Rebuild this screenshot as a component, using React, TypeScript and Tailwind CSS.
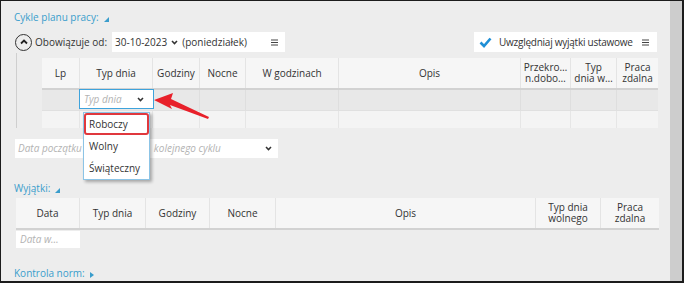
import type { ReactNode } from "react";

type Col = { label: string | string[]; w: string };

const planCols: Col[] = [
  { label: "Lp", w: "w-[38px]" },
  { label: "Typ dnia", w: "w-[73px]" },
  { label: "Godziny", w: "w-[47px]" },
  { label: "Nocne", w: "w-[46px]" },
  { label: "W godzinach", w: "w-[93px]" },
  { label: "Opis", w: "w-[182px]" },
  { label: ["Przekro…", "n.dobo…"], w: "w-[50px]" },
  { label: ["Typ", "dnia w…"], w: "w-[46px]" },
  { label: ["Praca", "zdalna"], w: "w-[41px]" },
];

const exceptionCols: Col[] = [
  { label: "Data", w: "w-[64px]" },
  { label: "Typ dnia", w: "w-[66px]" },
  { label: "Godziny", w: "w-[64px]" },
  { label: "Nocne", w: "w-[66px]" },
  { label: "Opis", w: "w-[260px]" },
  { label: ["Typ dnia", "wolnego"], w: "w-[65px]" },
  { label: ["Praca", "zdalna"], w: "w-[58px]" },
];

function Chevron() {
  return (
    <svg width="7" height="5" viewBox="0 0 7 5" className="shrink-0">
      <polyline points="1,1 3.5,3.6 6,1" fill="none" stroke="#333" strokeWidth="1.5" />
    </svg>
  );
}

function MenuIcon() {
  return (
    <svg width="7" height="7" viewBox="0 0 7 7" className="shrink-0">
      <path d="M0 1h7M0 3.5h7M0 6h7" stroke="#444" strokeWidth="1" />
    </svg>
  );
}

function SectionTitle({ children, open }: { children: ReactNode; open: boolean }) {
  return (
    <div className="flex h-[13px] items-center gap-[5px] text-[#3a9dcc]">
      <span>{children}</span>
      {open ? (
        <svg width="5" height="5" viewBox="0 0 5 5" className="mt-[3px]">
          <polygon points="5,0 5,5 0,5" fill="#3a9dcc" />
        </svg>
      ) : (
        <svg width="4" height="6" viewBox="0 0 4 6" className="mt-[2px]">
          <polygon points="0,0 4,3 0,6" fill="#3a9dcc" />
        </svg>
      )}
    </div>
  );
}

function HeaderRow({ cols }: { cols: Col[] }) {
  return (
    <div className="flex h-[32px] border-b-2 border-[#d2d2d2] bg-[#f6f6f6]">
      {cols.map((c, i) => (
        <div
          key={i}
          className={`${c.w} flex flex-col items-center justify-center text-center leading-[11px] ${
            i < cols.length - 1 ? "border-r border-[#e4e4e4]" : ""
          }`}
        >
          {Array.isArray(c.label) ? c.label.map((l) => <span key={l}>{l}</span>) : c.label}
        </div>
      ))}
    </div>
  );
}

export default function App() {
  return (
    <div className="relative flex h-[283px] w-[684px] overflow-hidden border-t border-l border-r-2 border-b-2 border-[#1c1c1c] bg-[#ededed] font-['Open_Sans',sans-serif] text-[10px] text-[#333]">
      <div className="flex flex-1 flex-col pl-[13px] pt-[10px]">
        <SectionTitle open>Cykle planu pracy:</SectionTitle>

        <div className="mt-[8px] flex h-[20px] w-[643px] items-center justify-between">
          <div className="flex items-center">
            <div className="ml-[1px] flex h-[17px] w-[17px] items-center justify-center rounded-full border-[1.5px] border-[#333]">
              <svg width="8" height="6" viewBox="0 0 8 6">
                <polyline points="1,4.5 4,1.5 7,4.5" fill="none" stroke="#222" strokeWidth="1.8" />
              </svg>
            </div>
            <span className="ml-[3px]">Obowiązuje od:</span>
            <div className="ml-[5px] flex h-[20px] w-[173px] items-center bg-white pl-[3px] pr-[7px]">
              <span>30-10-2023</span>
              <span className="ml-[4px]">
                <Chevron />
              </span>
              <span className="ml-[4px]">(poniedziałek)</span>
              <span className="ml-auto">
                <MenuIcon />
              </span>
            </div>
          </div>
          <div className="flex h-[20px] w-[183px] items-center bg-white pl-[5px] pr-[8px]">
            <svg width="13" height="11" viewBox="0 0 13 11" className="shrink-0">
              <polyline points="1.5,5.5 5,9 11.5,1.5" fill="none" stroke="#1f8fd6" strokeWidth="2.6" />
            </svg>
            <span className="ml-[7px] tracking-[-0.25px]">Uwzględniaj wyjątki ustawowe</span>
            <span className="ml-auto">
              <MenuIcon />
            </span>
          </div>
        </div>

        <div className="ml-[2px] mt-[1px] border-l border-[#cfcfcf] pl-[25px] pt-[5px]">
          <div className="w-[616px]">
            <HeaderRow cols={planCols} />
            <div className="flex h-[20px] bg-[#e8e8e8]">
              {planCols.map((c, i) =>
                i === 1 ? (
                  <div
                    key={i}
                    className="-mx-[1px] -mt-[1px] flex h-[20px] w-[75px] items-center border border-[#3ea3dc] bg-white pl-[4px] pr-[9px]"
                  >
                    <span className="italic text-[#b3b3b3]">Typ dnia</span>
                    <span className="ml-auto">
                      <Chevron />
                    </span>
                  </div>
                ) : (
                  <div
                    key={i}
                    className={`${c.w} ${i < planCols.length - 1 ? "border-r border-[#dedede]" : ""}`}
                  />
                )
              )}
            </div>
            <div className="flex h-[18px] border-t border-[#e0e0e0] bg-[#f4f4f4]">
              {planCols.map((c, i) => (
                <div
                  key={i}
                  className={`${c.w} ${i < planCols.length - 1 ? "border-r border-[#e6e6e6]" : ""}`}
                />
              ))}
            </div>
          </div>
        </div>

        <div className="ml-[1px] mt-[11px] flex h-[19px] w-[263px] items-center bg-white pl-[3px] pr-[6px]">
          <span className="italic text-[#b3b3b3]">Data początku</span>
          <span className="ml-[72px] italic text-[#b3b3b3]">kolejnego cyklu</span>
          <span className="ml-auto">
            <Chevron />
          </span>
        </div>

        <div className="mt-[24px]">
          <SectionTitle open>Wyjątki:</SectionTitle>
        </div>

        <div className="ml-[2px] mt-[3px] w-[643px]">
          <HeaderRow cols={exceptionCols} />
        </div>
        <div className="ml-[2px] mt-[1px] flex h-[17px] w-[64px] items-center bg-white pl-[4px]">
          <span className="italic text-[#b3b3b3]">Data w…</span>
        </div>

        <div className="mt-[19px]">
          <SectionTitle open={false}>Kontrola norm:</SectionTitle>
        </div>
      </div>

      <div className="w-[12px] shrink-0 bg-[#cdcdcd]" />

      {/* rozwinięta lista typu dnia */}
      <div className="absolute left-[82px] top-[111px] w-[67px] border border-[#8cc4e6] bg-white shadow-[2px_2px_3px_rgba(0,0,0,0.3)]">
        <div className="flex h-[22px] items-center rounded-[3px] border-2 border-[#e0383d] pl-[3px]">Roboczy</div>
        <div className="flex h-[22px] items-center pl-[5px]">Wolny</div>
        <div className="flex h-[22px] items-center pl-[5px]">Świąteczny</div>
      </div>

      <svg
        width="62"
        height="34"
        viewBox="0 0 62 34"
        className="absolute left-[150px] top-[86px]"
      >
        <polygon points="3,13 22,6 20,12 58,30 57,32 19,18 21,22" fill="#e8202a" />
      </svg>
    </div>
  );
}
